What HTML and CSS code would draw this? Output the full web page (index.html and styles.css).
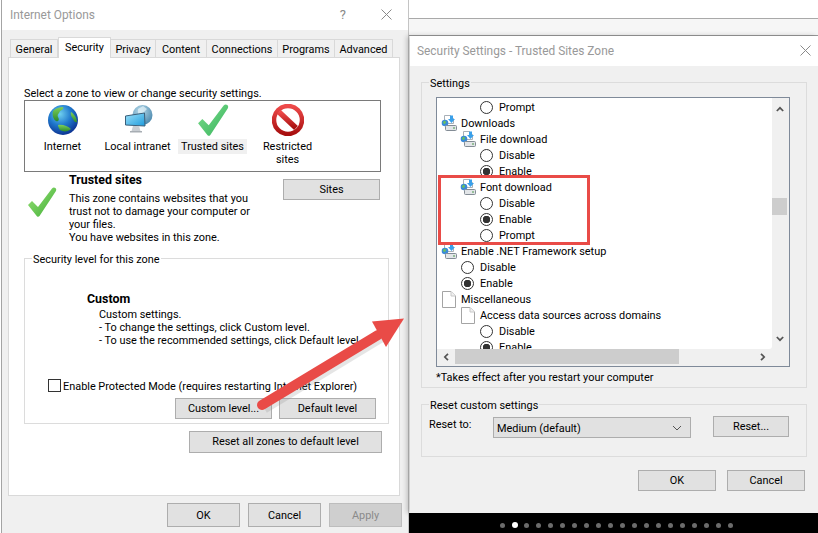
FILE: index.html
```html
<!DOCTYPE html>
<html lang="en">
<head>
<meta charset="utf-8">
<title>Internet Options</title>
<link rel="stylesheet" href="styles.css">
</head>
<body>
<svg class="defs" width="0" height="0" aria-hidden="true">
  <defs>
    <radialGradient id="sea" cx="40%" cy="30%" r="75%"><stop offset="0" stop-color="#6fd0ef"/><stop offset=".5" stop-color="#1f78cc"/><stop offset="1" stop-color="#0b2c8c"/></radialGradient>
    <linearGradient id="land" x1="0" y1="0" x2="0" y2="1"><stop offset="0" stop-color="#7fd05a"/><stop offset="1" stop-color="#2b8a2c"/></linearGradient>
    <linearGradient id="tick" x1="0" y1="0" x2="1" y2="1"><stop offset="0" stop-color="#7fdc8e"/><stop offset="1" stop-color="#36b45c"/></linearGradient>
    <linearGradient id="tick2" x1="0" y1="0" x2="1" y2="1"><stop offset="0" stop-color="#9be27a"/><stop offset="1" stop-color="#3fae34"/></linearGradient>
    <linearGradient id="ban" x1="0" y1="0" x2="0" y2="1"><stop offset="0" stop-color="#ee4a4a"/><stop offset="1" stop-color="#a80f0f"/></linearGradient>
    <radialGradient id="teal" cx="40%" cy="30%" r="80%"><stop offset="0" stop-color="#b9dcec"/><stop offset="1" stop-color="#3f7fa6"/></radialGradient>
    <linearGradient id="screen" x1="0" y1="0" x2="1" y2="1"><stop offset="0" stop-color="#9fe2fa"/><stop offset="1" stop-color="#1d9bdc"/></linearGradient>
    <symbol id="dl" viewBox="0 0 16 16">
      <path d="M3.500.5h6l3 3v5h-9z" fill="#fff" stroke="#a8b0b8"/>
      <circle cx="4" cy="8" r="3.300" fill="#3a8ad8"/>
      <path d="M2 7l2-1.500 1 1.500-1 2-1.500-.5z" fill="#6cc457"/>
      <path d="M9 .5h3v3.500h2l-3.500 4-3.500-4h2z" fill="#3aa0ea"/>
      <rect x="4.500" y="10.500" width="11" height="5" rx="1" fill="#e2e5e8" stroke="#838c95"/>
      <rect x="12" y="12.500" width="2" height="1" fill="#4a9a4a"/>
    </symbol>
    <symbol id="page" viewBox="0 0 14 17">
      <path d="M.5.500h8.500l4.500 4.500v11.500h-13z" fill="#fff" stroke="#a4a4a4"/>
      <path d="M9 .5v4.500h4.500" fill="#f1f1f1" stroke="#c8c8c8"/>
    </symbol>
    <symbol id="chev" viewBox="0 0 8 6">
      <path d="M.8 5L4 1.800 7.200 5" fill="none" stroke="#555" stroke-width="1.700"/>
    </symbol>
    <symbol id="closex" viewBox="0 0 11 11">
      <path d="M.5.500l10 10M10.500.500l-10 10" stroke="#8a8a8a" fill="none"/>
    </symbol>
    <symbol id="check" viewBox="0 0 30 30">
      <path d="M1 18l4-4 6 6L25 1.500c1-1.200 2.400-1.300 3.400-.5s1.100 2 .4 3.200L12.500 29c-.8 1-1.800 1-2.600.2z"/>
    </symbol>
  </defs>
</svg>

<main class="desktop">
  <div class="backdrop">
    <div class="strip strip-a"></div>
    <div class="strip strip-b"></div>
  </div>
  <div class="taskbar">
    <i class="dot"></i><i class="dot dot-on"></i><i class="dot"></i><i class="dot"></i><i class="dot"></i><i class="dot"></i><i class="dot"></i><i class="dot"></i><i class="dot"></i><i class="dot"></i><i class="dot"></i><i class="dot"></i><i class="dot"></i><i class="dot"></i><i class="dot"></i><i class="dot"></i><i class="dot"></i><i class="dot"></i><i class="dot"></i><i class="dot"></i>
  </div>

  <section class="window window-options">
    <header class="titlebar">
      <span class="title">Internet Options</span>
      <span class="help">?</span>
      <svg class="close close-options"><use href="#closex"/></svg>
    </header>
    <div class="tabs">
      <span class="tab tab-general">General</span>
      <span class="tab tab-security">Security</span>
      <span class="tab tab-privacy">Privacy</span>
      <span class="tab tab-content">Content</span>
      <span class="tab tab-connections">Connections</span>
      <span class="tab tab-programs">Programs</span>
      <span class="tab tab-advanced">Advanced</span>
    </div>
    <div class="panel">
      <p class="line">Select a zone to view or change security settings.</p>
      <div class="zones">
        <div class="zone">
          <svg class="zone-icon" viewBox="0 0 32 32">
            <circle cx="16" cy="16" r="15" fill="url(#sea)"/>
            <path d="M6 7c3-3 7-4 10-4 1 2-1 3-3 4-1 3-3 3-2 6 2 3 0 5-2 4-3-2-4-6-3-10z" fill="url(#land)"/>
            <path d="M11 21c4-1 10 1 13 4-3 3-8 3-11 1-1-2-2-3-2-5z" fill="url(#land)"/>
            <path d="M24 8c3 2 6 6 6 10-2 1-3-1-4-3s-3-4-2-7z" fill="url(#land)"/>
          </svg>
          <span class="zone-label">Internet</span>
        </div>
        <div class="zone">
          <svg class="zone-icon" viewBox="0 0 32 32">
            <circle cx="20.500" cy="11" r="10" fill="url(#teal)"/>
            <path d="M16 5l5-3 4 3-3 3-2 4-4-2z" fill="#e4f2f8" opacity=".7"/>
            <path d="M3.500 12l19-3 .5 13-19.500-1z" fill="url(#screen)" stroke="#3a5f7a"/>
            <path d="M11 22h6l1.500 5h-9z" fill="#c8cdd2"/>
            <rect x="8" y="27" width="12" height="1.500" fill="#a7adb3"/>
          </svg>
          <span class="zone-label">Local intranet</span>
        </div>
        <div class="zone">
          <svg class="zone-icon" viewBox="0 0 30 30"><use href="#check" fill="url(#tick)"/></svg>
          <span class="zone-label zone-selected">Trusted sites</span>
        </div>
        <div class="zone">
          <svg class="zone-icon" viewBox="0 0 32 32">
            <circle cx="16" cy="16" r="14" fill="#fff" stroke="url(#ban)" stroke-width="4.500"/>
            <path d="M7 8l17 16" stroke="url(#ban)" stroke-width="5.500"/>
          </svg>
          <span class="zone-label">Restricted<br>sites</span>
        </div>
      </div>
      <div class="zone-info">
        <svg class="info-icon" viewBox="0 0 30 30"><use href="#check" fill="url(#tick2)"/></svg>
        <div class="info-text">
          <p class="line strong">Trusted sites</p>
          <p class="line info-body">This zone contains websites that you<br>trust not to damage your computer or<br>your files.<br>You have websites in this zone.</p>
        </div>
        <button class="btn btn-sites">Sites</button>
      </div>
      <div class="group group-level">
        <span class="legend legend-light">Security level for this zone</span>
        <p class="line strong custom-head">Custom</p>
        <p class="line custom-body">Custom settings.<br>- To change the settings, click Custom level.<br>- To use the recommended settings, click Default level.</p>
        <label class="protected"><span class="checkbox"></span><span class="line protected-text">Enable Protected Mode (requires restarting Internet Explorer)</span></label>
        <div class="level-buttons">
          <button class="btn btn-level">Custom level...</button>
          <button class="btn btn-level">Default level</button>
        </div>
      </div>
      <button class="btn btn-resetall">Reset all zones to default level</button>
    </div>
    <footer class="options-footer">
      <button class="btn btn-foot">OK</button>
      <button class="btn btn-foot">Cancel</button>
      <button class="btn btn-foot btn-off">Apply</button>
    </footer>
  </section>

  <section class="window window-settings">
    <header class="titlebar">
      <span class="title">Security Settings - Trusted Sites Zone</span>
      <svg class="close close-settings"><use href="#closex"/></svg>
    </header>
    <div class="settings-body">
      <div class="group group-settings">
        <span class="legend">Settings</span>
        <div class="listbox">
          <div class="list-top">
            <div class="tree">
              <div class="row indent-2"><i class="radio"></i>Prompt</div>
              <div class="row indent-0"><svg class="node"><use href="#dl"/></svg>Downloads</div>
              <div class="row indent-1"><svg class="node"><use href="#dl"/></svg>File download</div>
              <div class="row indent-2"><i class="radio"></i>Disable</div>
              <div class="row indent-2"><i class="radio radio-on"></i>Enable</div>
              <div class="row indent-1"><svg class="node"><use href="#dl"/></svg>Font download</div>
              <div class="row indent-2"><i class="radio"></i>Disable</div>
              <div class="row indent-2"><i class="radio radio-on"></i>Enable</div>
              <div class="row indent-2"><i class="radio"></i>Prompt</div>
              <div class="row indent-0"><svg class="node"><use href="#dl"/></svg>Enable .NET Framework setup</div>
              <div class="row indent-1b"><i class="radio"></i>Disable</div>
              <div class="row indent-1b"><i class="radio radio-on"></i>Enable</div>
              <div class="row indent-0"><svg class="node node-page"><use href="#page"/></svg>Miscellaneous</div>
              <div class="row indent-1"><svg class="node node-page"><use href="#page"/></svg>Access data sources across domains</div>
              <div class="row indent-2"><i class="radio"></i>Disable</div>
              <div class="row indent-2"><i class="radio radio-on"></i>Enable</div>
            </div>
            <div class="vscroll">
              <svg class="chev"><use href="#chev"/></svg>
              <div class="vthumb"></div>
              <svg class="chev chev-down"><use href="#chev"/></svg>
            </div>
          </div>
          <div class="hscroll">
            <svg class="chev chev-left"><use href="#chev"/></svg>
            <div class="hthumb"></div>
            <svg class="chev chev-right"><use href="#chev"/></svg>
          </div>
        </div>
        <p class="line note">*Takes effect after you restart your computer</p>
      </div>
      <div class="group group-reset">
        <span class="legend">Reset custom settings</span>
        <span class="line reset-label">Reset to:</span>
        <div class="select"><span>Medium (default)</span>
          <svg class="select-arrow" viewBox="0 0 10 6"><path d="M1 1l4 4 4-4" fill="none" stroke="#555"/></svg>
        </div>
        <button class="btn btn-reset">Reset...</button>
      </div>
      <footer class="settings-footer">
        <button class="btn btn-set">OK</button>
        <button class="btn btn-set">Cancel</button>
      </footer>
    </div>
  </section>

  <div class="highlight"></div>
  <svg class="arrow" viewBox="0 0 818 533">
    <path d="M264 408L381 337" stroke="#8a8a8a" stroke-opacity=".22" stroke-width="11" fill="none"/>
    <path d="M262 405L378 335" stroke="#e94b47" stroke-width="10" stroke-linecap="round" fill="none"/>
    <path d="M404 318.500L372 321.500 386 347z" fill="#e94b47"/>
  </svg>
</main>
</body>
</html>
```
FILE: styles.css
```css
* { box-sizing: border-box; }
html, body { margin: 0; padding: 0; }
body {
  width: 818px;
  height: 533px;
  overflow: hidden;
  background: #fff;
  font-family: Roboto, "Open Sans", sans-serif;
  font-size: 10.9px;
  color: #000;
}
p { margin: 0; }
i { font-style: normal; }
.defs { position: absolute; }
.desktop { position: relative; width: 818px; height: 533px; overflow: hidden; }

.backdrop { position: absolute; left: 409px; top: 0; width: 409px; height: 36px; }
.strip-a { height: 19px; border-bottom: 1px solid #a9a9a9; }
.strip-b { height: 17px; background: #f6f6f6; border-bottom: 1px solid #9a9a9a; }

.taskbar {
  position: absolute; left: 409px; top: 513px; width: 409px; height: 20px;
  background: #000;
  display: flex; align-items: center; gap: 7px;
  padding: 4px 0 0 91px;
}
.dot { width: 5px; height: 5px; border-radius: 50%; background: #6b6b6b; }
.dot-on { background: #fff; width: 6px; height: 6px; margin-right: -1px; }

.window { position: absolute; background: #f0f0f0; display: flex; flex-direction: column; }
.window-options {
  left: 1px; top: 0; width: 408px; height: 533px;
  border-left: 1px solid #a4a4a4;
  border-right: 1px solid #c4c4c4;
}
.window-settings {
  left: 410px; top: 36px; width: 408px; height: 477px;
  box-shadow: -3px 0 5px rgba(0,0,0,.22);
}

.titlebar { height: 30px; background: #fff; display: flex; align-items: center; flex: none; padding-bottom: 1px; }
.title { color: #999; font-size: 11.9px; padding-left: 8px; }
.window-settings .title { padding-left: 7px; }
.help { color: #888; font-size: 13px; margin-left: auto; }
.close { width: 11px; height: 11px; }
.close-options { margin: 0 16px 0 35px; }
.close-settings { margin: 0 7px 0 auto; }

.tabs { display: flex; height: 27px; padding: 7px 0 0 8px; position: relative; z-index: 1; flex: none; }
.tab {
  height: 18px; margin-top: 2px; padding-top: 1px; line-height: 17px; text-align: center;
  background: #f0f0f0; border: 1px solid #d9d9d9; border-bottom: 0; border-left: 0;
}
.tab-general { width: 48px; border-left: 1px solid #d9d9d9; }
.tab-security {
  width: 53px; height: 21px; margin-top: 0; padding-top: 0; line-height: 19px; background: #fff;
  border-left: 1px solid #d9d9d9;
}
.tab-privacy { width: 45px; }
.tab-content { width: 51px; }
.tab-connections { width: 71px; }
.tab-programs { width: 57px; }
.tab-advanced { width: 58px; }

.panel {
  width: 392px; height: 439px; margin-left: 6px;
  background: #fff; border: 1px solid #d9d9d9;
  padding: 29px 0 0 15px;
}
.line { line-height: 13px; }
.strong { font-weight: 700; font-size: 12.4px; }

.zones {
  width: 357px; height: 72px;
  border: 1px solid #7a7a7a;
  display: flex; padding-top: 3px;
}
.zone { width: 75px; display: flex; flex-direction: column; align-items: center; text-align: center; }
.zone-icon { width: 32px; height: 32px; flex: none; }
.zone-label { margin-top: 4px; line-height: 13px; }
.zone-selected { background: #f0f0f0; margin-top: 3px; padding: 1px 3px; white-space: nowrap; }

.zone-info { display: flex; height: 86px; }
.info-icon { width: 30px; height: 30px; margin: 15px 12px 0 3px; flex: none; }
.info-text { width: 214px; flex: none; padding-top: 1px; }
.info-body { margin-top: 6px; }
.btn {
  font: inherit; color: #000; padding: 1px 0 0; line-height: 1;
  background: #e1e1e1; border: 1px solid #adadad;
  display: flex; align-items: center; justify-content: center;
}
.btn-sites { width: 97px; height: 21px; margin-top: 7px; }

.group { position: relative; border: 1px solid #dcdcdc; }
.legend {
  position: absolute; left: 7px; top: -6px; padding: 0 1px; line-height: 13px;
  background: #f0f0f0;
}
.legend-light { background: #fff; }
.group-level {
  width: 365px; height: 166px;
  padding-top: 33px;
  display: flex; flex-direction: column;
}
.custom-head { padding-left: 62px; }
.custom-body { padding-left: 74px; margin-top: 3px; white-space: nowrap; }
.protected { display: flex; align-items: center; margin: 32px 0 0 23px; height: 13px; white-space: nowrap; }
.protected-text { margin-top: 2px; }
.checkbox { width: 13px; height: 13px; border: 1px solid #333; background: #fff; margin-right: 2px; flex: none; }
.level-buttons { display: flex; gap: 7px; margin: 6px 0 0 150px; }
.btn-level { width: 97px; height: 21px; }
.btn-resetall { width: 193px; height: 22px; margin: 7px 0 0 165px; }

.options-footer { display: flex; gap: 8px; justify-content: flex-end; padding: 7px 6px 0 0; }
.btn-foot { width: 73px; height: 24px; padding-top: 2px; }
.btn-off { color: #8a8a8a; background: #cfcfcf; border-color: #bdbdbd; }

.settings-body { padding: 16px 0 0 11px; flex: 1; }
.group-settings { width: 386px; height: 306px; padding: 14px 0 0 14px; }
.listbox {
  width: 354px; height: 270px;
  border: 1px solid #7f8a99;
  background: #f0f0f0;
  display: flex; flex-direction: column;
}
.list-top { display: flex; height: 251px; flex: none; }
.tree {
  width: 335px; height: 251px; overflow: hidden;
  background: #fff; padding-top: 1px;
  border-radius: 0 0 3px 0;
  flex: none;
}
.row { height: 16px; display: flex; align-items: center; white-space: nowrap; }
.indent-0 { padding-left: 4px; }
.indent-1 { padding-left: 23px; }
.indent-1b { padding-left: 24px; }
.indent-2 { padding-left: 43px; }
.node { width: 16px; height: 16px; margin-right: 4px; flex: none; }
.node-page { width: 14px; height: 17px; margin-right: 5px; margin-left: 1px; }
.radio {
  width: 13px; height: 13px; border-radius: 50%;
  border: 1px solid #333; background: #fff;
  margin-right: 6px; flex: none;
}
.radio-on { background: radial-gradient(circle, #333 0 3.500px, #fff 4px); }

.vscroll { width: 17px; display: flex; flex-direction: column; align-items: flex-start; }
.vscroll .chev { margin: 8px 0 0 4px; }
.vscroll .chev-down { margin: auto 0 7px 4px; transform: rotate(180deg); }
.chev { width: 8px; height: 6px; display: block; flex: none; }
.vthumb { width: 15px; height: 17px; background: #cdcdcd; margin-top: 86px; }
.hscroll { height: 17px; display: flex; align-items: flex-start; }
.chev-left { transform: rotate(-90deg); margin: 5px 0 0 5px; }
.chev-right { transform: rotate(90deg); margin: 5px 0 0 80px; }
.hthumb { width: 224px; height: 15px; background: #cdcdcd; margin-left: 5px; }

.note { margin: 4px 0 0 0; }
.group-reset {
  width: 386px; height: 53px; margin-top: 16px;
  display: flex; align-items: flex-start;
  padding: 11px 0 0 7px;
}
.reset-label { width: 64px; margin-top: 2px; flex: none; }
.select {
  width: 198px; height: 21px; margin-top: 1px;
  background: #e1e1e1; border: 1px solid #adadad;
  display: flex; align-items: center; justify-content: space-between;
  padding: 1px 8px 0 3px;
}
.select-arrow { width: 10px; height: 6px; }
.btn-reset { width: 76px; height: 21px; margin-left: 22px; padding-top: 2px; }

.settings-footer { display: flex; gap: 11px; padding: 13px 0 0 217px; }
.btn-set { width: 78px; height: 21px; padding-top: 2px; }

.highlight {
  position: absolute; left: 438px; top: 175px; width: 152px; height: 70px;
  border: 3px solid #e94b47;
}
.arrow { position: absolute; left: 0; top: 0; width: 818px; height: 533px; pointer-events: none; }
```
